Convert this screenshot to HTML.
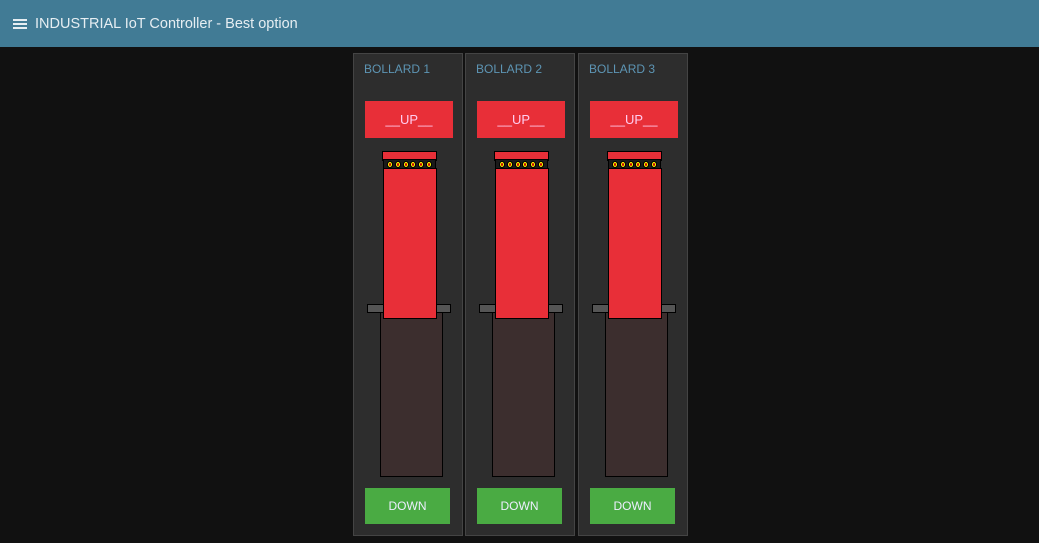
<!DOCTYPE html>
<html><head><meta charset="utf-8"><style>
*{margin:0;padding:0;box-sizing:border-box}
body{width:1039px;height:543px;background:#111;overflow:hidden;font-family:"Liberation Sans",sans-serif;position:relative}
.hdr{position:absolute;left:0;top:0;width:1039px;height:47px;background:#417b95}
.hdr .t{position:absolute;left:35px;top:16px;color:#e6eef2;font-size:14.5px}
.ham{position:absolute;left:13px;width:14px;height:2px;background:#e6eef2}
.p{position:absolute;top:53px;width:110px;height:483px;background:#2d2d2d;border:1px solid #444}
.a{position:absolute}
.lbl{left:10px;top:8px;color:#5d95b4;font-size:12px}
.up{left:11px;top:47px;width:88px;height:37px;background:#e82f38;color:#fce;font-size:13px;text-align:center;line-height:37px}
.cap{left:28px;top:97px;width:55px;height:10px;background:#e82f38;border:1px solid #000}
.leds{left:29px;top:105px;width:53px;height:10px;background:#1a1a1a;border:1px solid #000;display:flex;justify-content:space-between;align-items:center;padding:0 3px}
.leds i{display:block;width:6px;height:7px;border-radius:50%;background:#ff0;border:1px solid #000;position:relative}
.leds i:after{content:"";position:absolute;left:1px;top:1px;width:2px;height:3px;border-radius:50%;background:#c00}
.rail{left:13px;top:250px;width:84px;height:9px;background:#555;border:1px solid #000}
.sleeve{left:26px;top:258px;width:63px;height:165px;background:#3c2e2e;border:1px solid #000}
.body{left:29px;top:114px;width:54px;height:151px;background:#e82f38;border:1px solid #000}
.dn{left:11px;top:434px;width:85px;height:36px;background:#4aab43;color:#eef;font-size:12px;text-align:center;line-height:36px}
</style></head><body>
<div class="hdr"><div class="ham" style="top:19px"></div><div class="ham" style="top:23px"></div><div class="ham" style="top:27px"></div><div class="t">INDUSTRIAL IoT Controller - Best option</div></div>

<div class="p" style="left:353px">
<div class="a lbl">BOLLARD 1</div><div class="a up">__UP__</div>
<div class="a rail"></div><div class="a sleeve"></div>
<div class="a cap"></div><div class="a leds"><i></i><i></i><i></i><i></i><i></i><i></i></div><div class="a body"></div>
<div class="a dn">DOWN</div></div>

<div class="p" style="left:465px">
<div class="a lbl">BOLLARD 2</div><div class="a up">__UP__</div>
<div class="a rail"></div><div class="a sleeve"></div>
<div class="a cap"></div><div class="a leds"><i></i><i></i><i></i><i></i><i></i><i></i></div><div class="a body"></div>
<div class="a dn">DOWN</div></div>

<div class="p" style="left:578px">
<div class="a lbl">BOLLARD 3</div><div class="a up">__UP__</div>
<div class="a rail"></div><div class="a sleeve"></div>
<div class="a cap"></div><div class="a leds"><i></i><i></i><i></i><i></i><i></i><i></i></div><div class="a body"></div>
<div class="a dn">DOWN</div></div>
</body></html>
